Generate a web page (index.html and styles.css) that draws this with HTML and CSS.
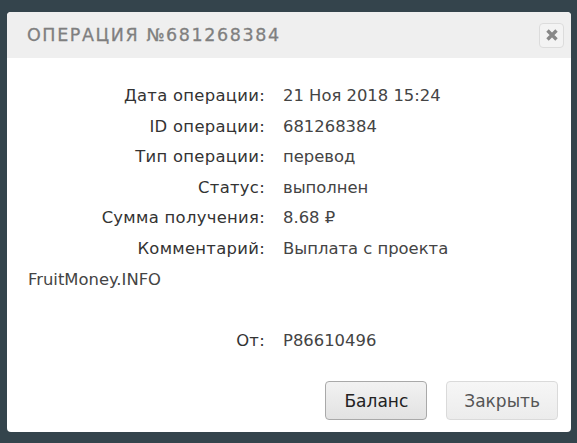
FILE: index.html
```html
<!DOCTYPE html>
<html lang="ru">
<head>
<meta charset="utf-8">
<title>Операция</title>
<link rel="stylesheet" href="styles.css">
</head>
<body>
<div class="overlay">
  <div class="modal">
    <div class="modal-header">
      <h3 class="modal-title">ОПЕРАЦИЯ №681268384</h3>
      <button class="close-btn" aria-label="Закрыть">
        <svg width="14" height="14" viewBox="0 0 14 14"><path d="M2.5 2.5 L11.5 11.5 M11.5 2.5 L2.5 11.5" stroke="#888" stroke-width="3.4" stroke-linecap="butt"/></svg>
      </button>
    </div>
    <div class="modal-body">
      <p class="row"><span class="label">Дата операции:</span>21 Ноя 2018 15:24</p>
      <p class="row"><span class="label">ID операции:</span>681268384</p>
      <p class="row"><span class="label">Тип операции:</span>перевод</p>
      <p class="row"><span class="label">Статус:</span>выполнен</p>
      <p class="row"><span class="label">Сумма получения:</span>8.68 ₽</p>
      <p class="row"><span class="label">Комментарий:</span>Выплата с проекта FruitMoney.INFO<br>&nbsp;</p>
      <p class="row"><span class="label">От:</span>P86610496</p>
    </div>
    <div class="modal-footer">
      <button class="btn btn-primary">Баланс</button>
      <button class="btn btn-light">Закрыть</button>
    </div>
  </div>
</div>
</body>
</html>
```
FILE: styles.css
```css
html, body {
  margin: 0;
  padding: 0;
  height: 100%;
}
body {
  background: #34444c;
  font-family: "DejaVu Sans", sans-serif;
}
.overlay {
  padding: 12px 6px 11px 7px;
  height: 443px;
  box-sizing: border-box;
}
.modal {
  background: #fff;
  border-radius: 4px;
  height: 100%;
  display: flex;
  flex-direction: column;
  overflow: hidden;
}
.modal-header {
  height: 46px;
  background: #efefef;
  display: flex;
  align-items: center;
  justify-content: space-between;
  padding: 0 7px 0 20px;
  flex-shrink: 0;
}
.modal-title {
  margin: 0;
  font-family: "DejaVu Sans", sans-serif;
  font-weight: normal;
  font-size: 17.5px;
  letter-spacing: 1.6px;
  color: #7f7f7f;
  -webkit-text-stroke: 0.3px #7f7f7f;
}
.close-btn {
  width: 25px;
  height: 25px;
  padding: 0;
  border: 1px solid #dcdcdc;
  border-radius: 4px;
  background: #f3f3f3;
  display: flex;
  align-items: center;
  justify-content: center;
}
.modal-body {
  flex: 1;
  padding: 23px 20px 0 21px;
  font-size: 16.4px;
  color: #444;
}
.row {
  margin: 0;
  line-height: 30.6px;
}
.label {
  display: inline-block;
  width: 237px;
  margin-right: 18px;
  text-align: right;
  color: #333;
  letter-spacing: 0.3px;
}
.modal-footer {
  display: flex;
  justify-content: flex-end;
  gap: 19px;
  padding: 0 13px 12px 0;
}
.btn {
  height: 39px;
  padding: 0 18px;
  border-radius: 4px;
  font-family: "DejaVu Sans", sans-serif;
  font-size: 17px;
}
.btn-primary {
  border: 1px solid #a9a9a9;
  background: linear-gradient(#f2f2f2, #e2e2e2);
  color: #222;
}
.btn-light {
  padding: 0 17px;
  border: 1px solid #dadada;
  background: linear-gradient(#f6f6f6, #ececec);
  color: #555;
}
```
